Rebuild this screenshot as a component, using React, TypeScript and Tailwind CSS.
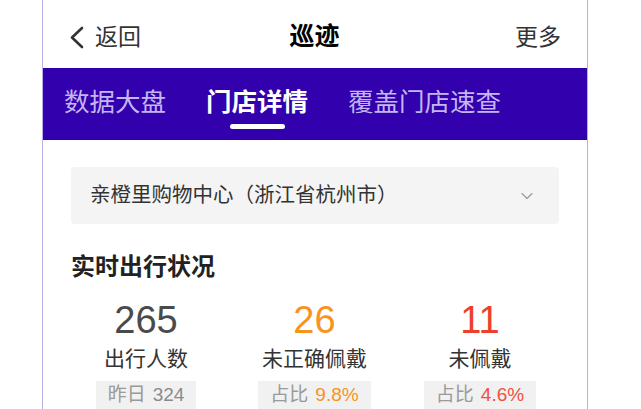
import React from 'react';
import { ChevronDown } from 'lucide-react';

const font = { fontFamily: '"Liberation Sans", "Noto Sans CJK SC", sans-serif' };

const stats = [
  { value: '265', color: 'text-[#4a4a4a]', label: '出行人数', tagLabel: '昨日', tagValue: '324', tagColor: 'text-[#8a8a8a]' },
  { value: '26', color: 'text-[#f7931e]', label: '未正确佩戴', tagLabel: '占比', tagValue: '9.8%', tagColor: 'text-[#f7931e]' },
  { value: '11', color: 'text-[#ee3f2a]', label: '未佩戴', tagLabel: '占比', tagValue: '4.6%', tagColor: 'text-[#f0513e]' },
];

const App = () => {
  return (
    <div className="w-[641px] h-[409px] overflow-hidden bg-white" style={font}>
      <div className="ml-[42px] w-[546px] h-[409px] border-x border-[#b8aee8] flex flex-col">
        {/* Header */}
        <div className="h-[68px] flex items-center justify-between pl-[25px] pr-[26px] pt-[6px] shrink-0">
          <div className="flex items-center w-[120px]">
            <svg width="17" height="23" viewBox="0 0 17 23" className="text-[#333]">
              <polyline points="14,2 4,11.5 14,21" fill="none" stroke="currentColor" strokeWidth="2.6" strokeLinecap="round" strokeLinejoin="round" />
            </svg>
            <span className="text-[23px] text-[#333] ml-[10px]">返回</span>
          </div>
          <span className="text-[25px] font-bold text-black">巡迹</span>
          <span className="text-[23px] text-[#333] w-[120px] text-right">更多</span>
        </div>

        {/* Tabs */}
        <div className="h-[72px] bg-[#3300ad] flex items-start pl-[21px] pt-[17px] gap-[40px] shrink-0">
          <span className="text-[25.5px] leading-[34px] text-[#c3b6f2]">数据大盘</span>
          <div className="flex flex-col items-center">
            <span className="text-[25.5px] leading-[34px] font-bold text-white">门店详情</span>
            <div className="w-[55px] h-[5px] rounded-full bg-white mt-[5px]" />
          </div>
          <span className="text-[25.5px] leading-[34px] text-[#c3b6f2]">覆盖门店速查</span>
        </div>

        {/* Content */}
        <div className="px-[28px] pt-[27px]">
          <div className="h-[57px] bg-[#f4f4f4] rounded-[4px] flex items-center justify-between pl-[19px] pr-[22px]">
            <span className="text-[20.5px] text-[#333]">亲橙里购物中心（浙江省杭州市）</span>
            <ChevronDown className="w-[20px] h-[20px] text-[#9a9a9a]" strokeWidth={1.4} />
          </div>

          <div className="mt-[31px] text-[24px] font-bold text-[#222] leading-none">实时出行状况</div>

          <div className="grid grid-cols-[166px_171px_160px] -ml-[8px] mt-[22px]">
            {stats.map((s) => (
              <div key={s.label} className="flex flex-col items-center">
                <span className={`text-[38px] leading-none font-medium ${s.color}`}>{s.value}</span>
                <span className="text-[21px] text-[#333] mt-[9px] leading-none">{s.label}</span>
                <div className="mt-[12px] bg-[#f1f1f1] px-[12px] h-[28px] flex items-center gap-[7px] text-[19px]">
                  <span className="text-[#9a9a9a]">{s.tagLabel}</span>
                  <span className={s.tagColor}>{s.tagValue}</span>
                </div>
              </div>
            ))}
          </div>
        </div>
      </div>
    </div>
  );
};

export default App;
